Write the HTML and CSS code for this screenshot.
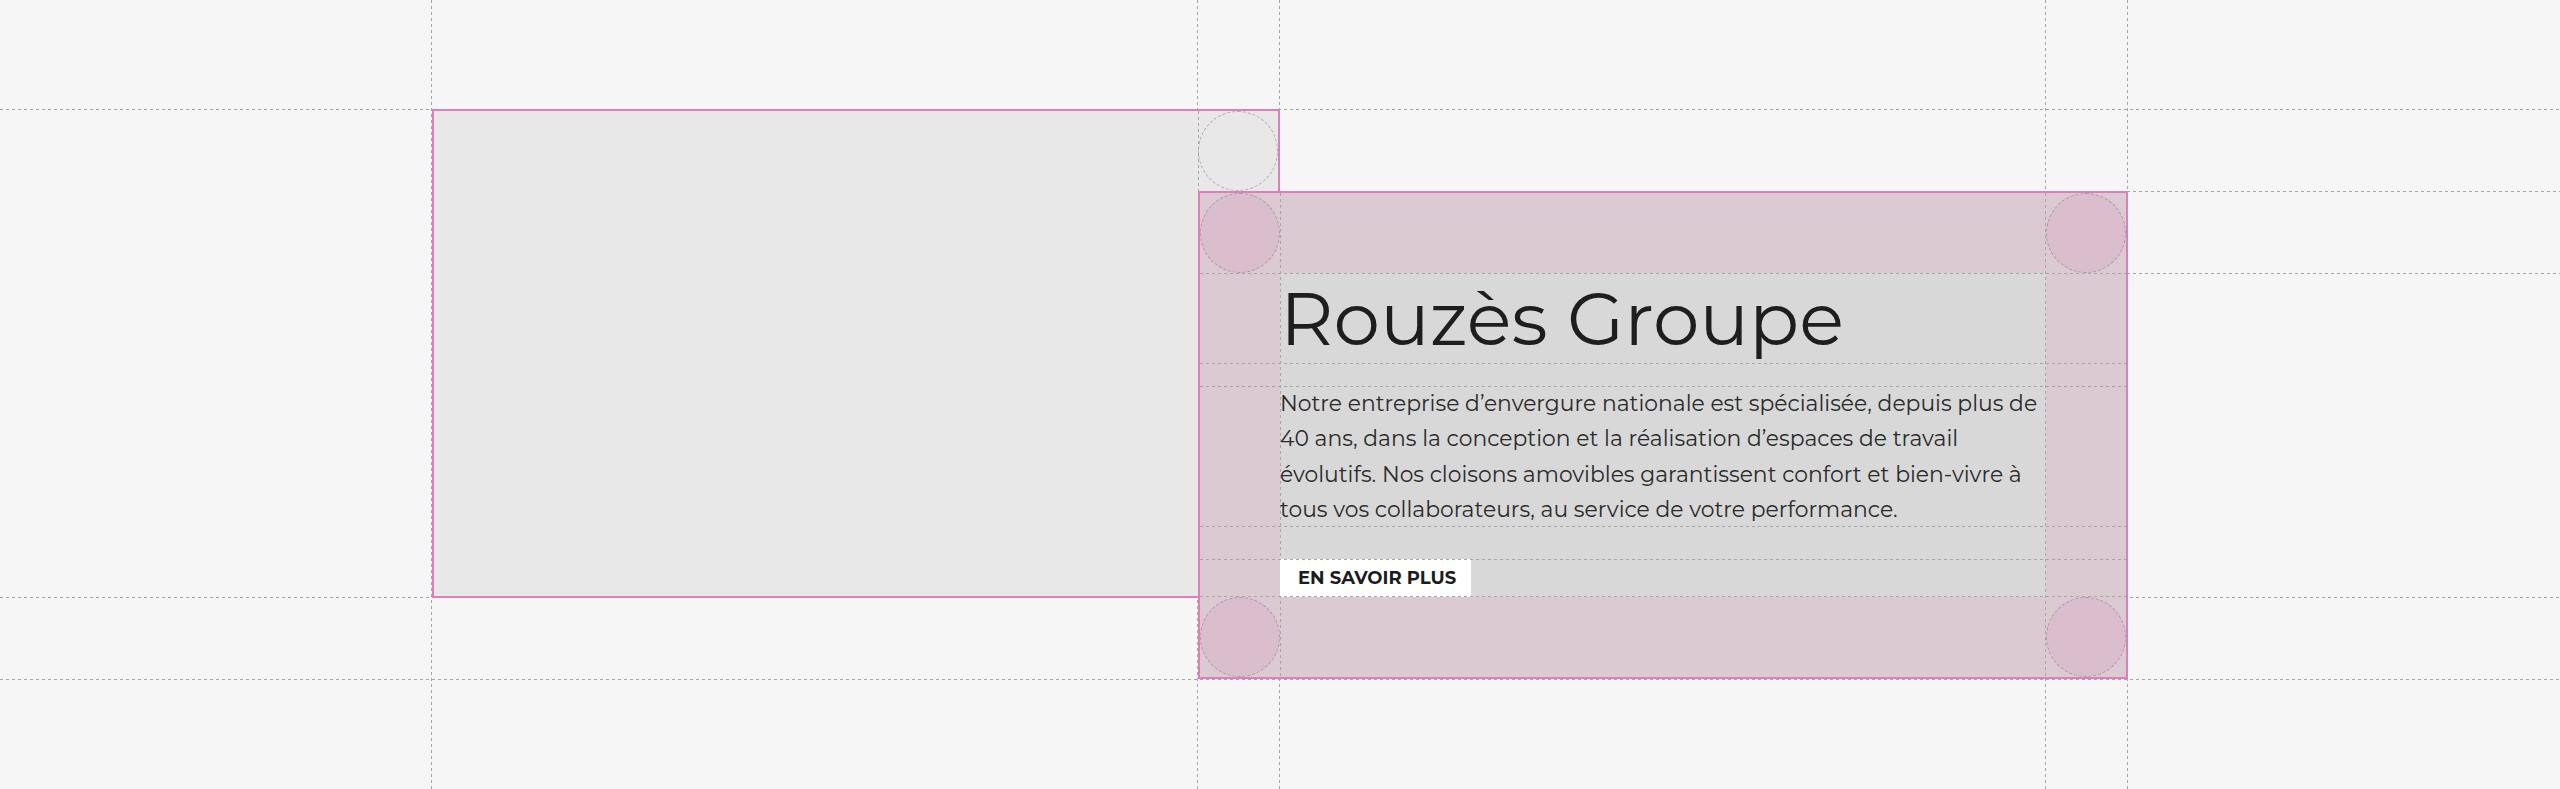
FILE: index.html
```html
<!DOCTYPE html>
<html lang="fr">
<head>
    <meta charset="UTF-8">
    <meta name="viewport" content="width=device-width, initial-scale=1.0">
    <title>Rouzès Groupe</title>
    <link rel="stylesheet" href="styles.css">
</head>
<body>
    <div class="canvas">
        <!-- guides de la grille -->
        <div class="guides">
            <span class="guide-h" style="top:109px"></span>
            <span class="guide-h from-card" style="top:191px"></span>
            <span class="guide-h from-card" style="top:273px"></span>
            <span class="guide-h" style="top:597px"></span>
            <span class="guide-h" style="top:679px"></span>
            <span class="guide-v" style="left:431px"></span>
            <span class="guide-v" style="left:1197px"></span>
            <span class="guide-v" style="left:1279px"></span>
            <span class="guide-v" style="left:2045px"></span>
            <span class="guide-v" style="left:2127px"></span>
        </div>

        <div class="frame media">
            <span class="media-guide"></span>
            <span class="corner tr"></span>
        </div>

        <section class="frame card">
            <span class="corner tl"></span>
            <span class="corner tr"></span>
            <span class="corner bl"></span>
            <span class="corner br"></span>

            <div class="card-body">
                <h1 class="card-title guided">Rouzès Groupe</h1>
                <p class="card-text guided">Notre entreprise d’envergure nationale est spécialisée, depuis plus de 40 ans, dans la conception et la réalisation d’espaces de travail évolutifs. Nos cloisons amovibles garantissent confort et bien-vivre à tous vos collaborateurs, au service de votre performance.</p>
                <div class="card-actions guided">
                    <a href="#" class="btn">EN SAVOIR PLUS</a>
                </div>
            </div>
        </section>
    </div>
</body>
</html>
```

FILE: styles.css
```css
* {
    box-sizing: border-box;
}
body {
    margin: 0;
    background-color: #f6f6f6;
    font-family: 'Montserrat', 'Inter', sans-serif;
    overflow: hidden;
}
.canvas {
    position: relative;
    height: 789px;
    display: grid;
    grid-template-columns: 432px 766px 82px 766px 82px 1fr;
    grid-template-rows: 109px 82px 407px 81px 1fr;
}

/* lignes pointillées */
.guides {
    position: absolute;
    inset: 0;
    pointer-events: none;
}
.guide-h, .guide-v,
.guided::before, .guided::after,
.card-body::before, .card-body::after,
.media-guide {
    position: absolute;
    content: '';
}
.guide-h, .guided::before, .guided::after {
    height: 1px;
    background: repeating-linear-gradient(to right, #a6a6a6 0 3px, transparent 3px 6px);
}
.guide-v, .card-body::before, .card-body::after, .media-guide {
    width: 1px;
    background: repeating-linear-gradient(to bottom, #a6a6a6 0 3px, transparent 3px 6px);
}
.guide-h {
    left: 0;
    right: 0;
}
.guide-h.from-card {
    left: 1197px;
}
.guide-v {
    top: 0;
    bottom: 0;
}

/* cadres */
.frame {
    position: relative;
    border: 2px solid #e27db9;
}
.media {
    grid-column: 2 / 4;
    grid-row: 2 / 4;
    background-color: #e8e8e8;
    z-index: 1;
}
.media-guide {
    top: 0;
    bottom: 0;
    right: 79px;
}
.card {
    grid-column: 3 / 6;
    grid-row: 3 / 5;
    padding: 80px;
    background-color: #dbcad2;
    z-index: 2;
}

.corner {
    position: absolute;
    width: 80px;
    height: 80px;
    border: 1px dashed #a8979f;
    border-radius: 50%;
    background-color: rgba(214, 160, 193, 0.28);
}
.media .corner {
    border-color: #ababab;
    background-color: transparent;
}
.corner.tl { top: 0; left: 0; }
.corner.tr { top: 0; right: 0; }
.corner.bl { bottom: 0; left: 0; }
.corner.br { bottom: 0; right: 0; }

/* contenu */
.card-body {
    position: relative;
    height: 100%;
    background-color: #d8d8d8;
    display: flex;
    flex-direction: column;
}
.card-body::before, .card-body::after {
    top: -80px;
    bottom: -80px;
}
.card-body::before {
    left: 0;
}
.card-body::after {
    right: 0;
}
.guided {
    position: relative;
}
.guided::before, .guided::after {
    left: -80px;
    right: -80px;
}
.guided::before {
    top: 0;
}
.guided::after {
    bottom: 0;
}

.card-title {
    margin: 0;
    height: 91px;
    font-size: 74px;
    font-weight: 400;
    line-height: 91px;
    color: #1e1e1e;
    white-space: nowrap;
}
.card-text {
    margin: 22px 0 0 0;
    font-size: 21.85px;
    line-height: 35.25px;
    color: #2b2b2b;
}
.card-actions {
    margin-top: 32px;
    height: 38px;
}
.btn {
    display: inline-block;
    height: 38px;
    padding: 0 15px 0 18px;
    background-color: #ffffff;
    color: #1c1c1c;
    font-size: 18px;
    font-weight: 700;
    line-height: 38px;
    text-decoration: none;
}
```
